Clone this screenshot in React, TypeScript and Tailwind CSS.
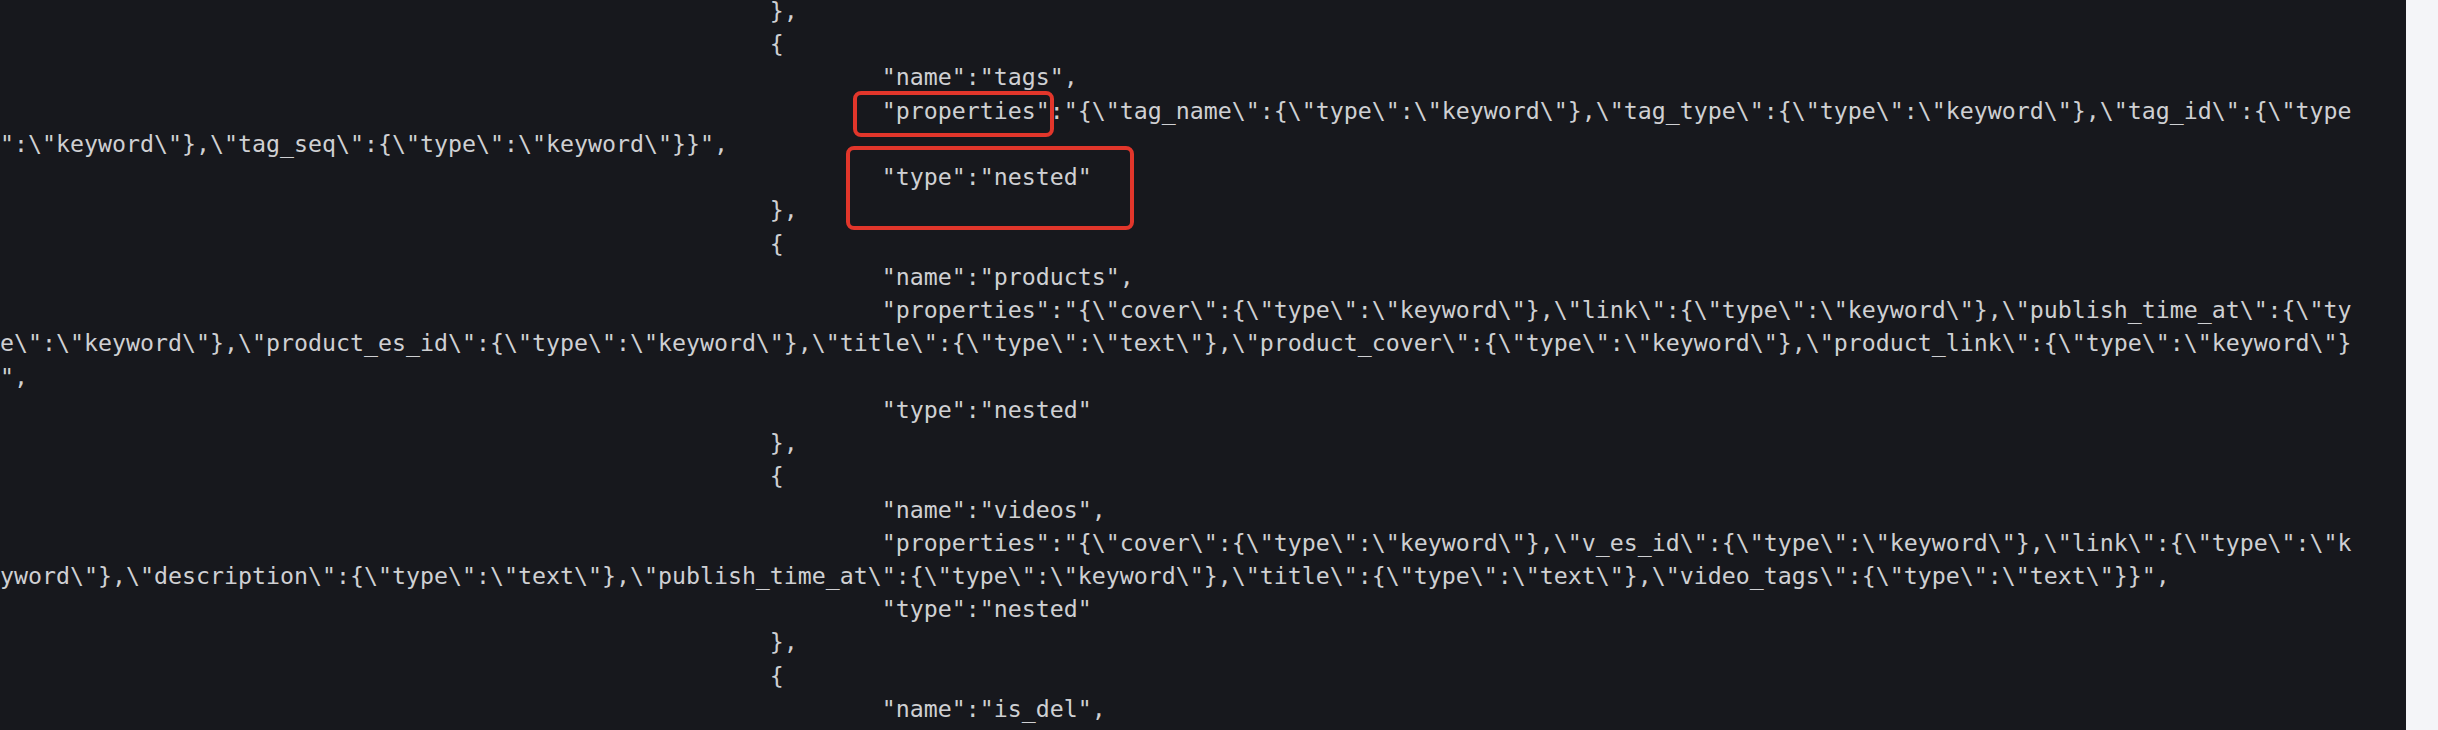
import React from "react";

const T7 = " ".repeat(55);
const T8 = " ".repeat(63);

const rows: string[] = [
  T7 + "},",
  T7 + "{",
  T8 + String.raw`"name":"tags",`,
  T8 + String.raw`"properties":"{\"tag_name\":{\"type\":\"keyword\"},\"tag_type\":{\"type\":\"keyword\"},\"tag_id\":{\"type`,
  String.raw`":\"keyword\"},\"tag_seq\":{\"type\":\"keyword\"}}",`,
  T8 + String.raw`"type":"nested"`,
  T7 + "},",
  T7 + "{",
  T8 + String.raw`"name":"products",`,
  T8 + String.raw`"properties":"{\"cover\":{\"type\":\"keyword\"},\"link\":{\"type\":\"keyword\"},\"publish_time_at\":{\"ty`,
  String.raw`e\":\"keyword\"},\"product_es_id\":{\"type\":\"keyword\"},\"title\":{\"type\":\"text\"},\"product_cover\":{\"type\":\"keyword\"},\"product_link\":{\"type\":\"keyword\"}`,
  String.raw`",`,
  T8 + String.raw`"type":"nested"`,
  T7 + "},",
  T7 + "{",
  T8 + String.raw`"name":"videos",`,
  T8 + String.raw`"properties":"{\"cover\":{\"type\":\"keyword\"},\"v_es_id\":{\"type\":\"keyword\"},\"link\":{\"type\":\"k`,
  String.raw`yword\"},\"description\":{\"type\":\"text\"},\"publish_time_at\":{\"type\":\"keyword\"},\"title\":{\"type\":\"text\"},\"video_tags\":{\"type\":\"text\"}}",`,
  T8 + String.raw`"type":"nested"`,
  T7 + "},",
  T7 + "{",
  T8 + String.raw`"name":"is_del",`,
  T8 + String.raw`"type":"boolean"`,
];

export default function App() {
  return (
    <div className="flex h-[730px] w-[2438px] overflow-hidden bg-[#17181d]">
      <div className="relative h-full flex-1 overflow-hidden bg-[#17181d]">
        <div className="mt-[-6px] whitespace-pre font-['DejaVu_Sans_Mono',monospace] text-[23.25px] leading-[33.24px] text-[#cfd0d3]">
          {rows.map((r, i) => (
            <div key={i} className="h-[33.24px]">
              {r}
            </div>
          ))}
        </div>
        <div className="pointer-events-none absolute left-[853px] top-[91px] h-[46px] w-[201px] rounded-[8px] border-[4px] border-[#e2362b]" />
        <div className="pointer-events-none absolute left-[846px] top-[146px] h-[84px] w-[288px] rounded-[8px] border-[4px] border-[#e2362b]" />
      </div>
      <div className="h-full w-[32px] bg-[#f4f5f8]" />
    </div>
  );
}
